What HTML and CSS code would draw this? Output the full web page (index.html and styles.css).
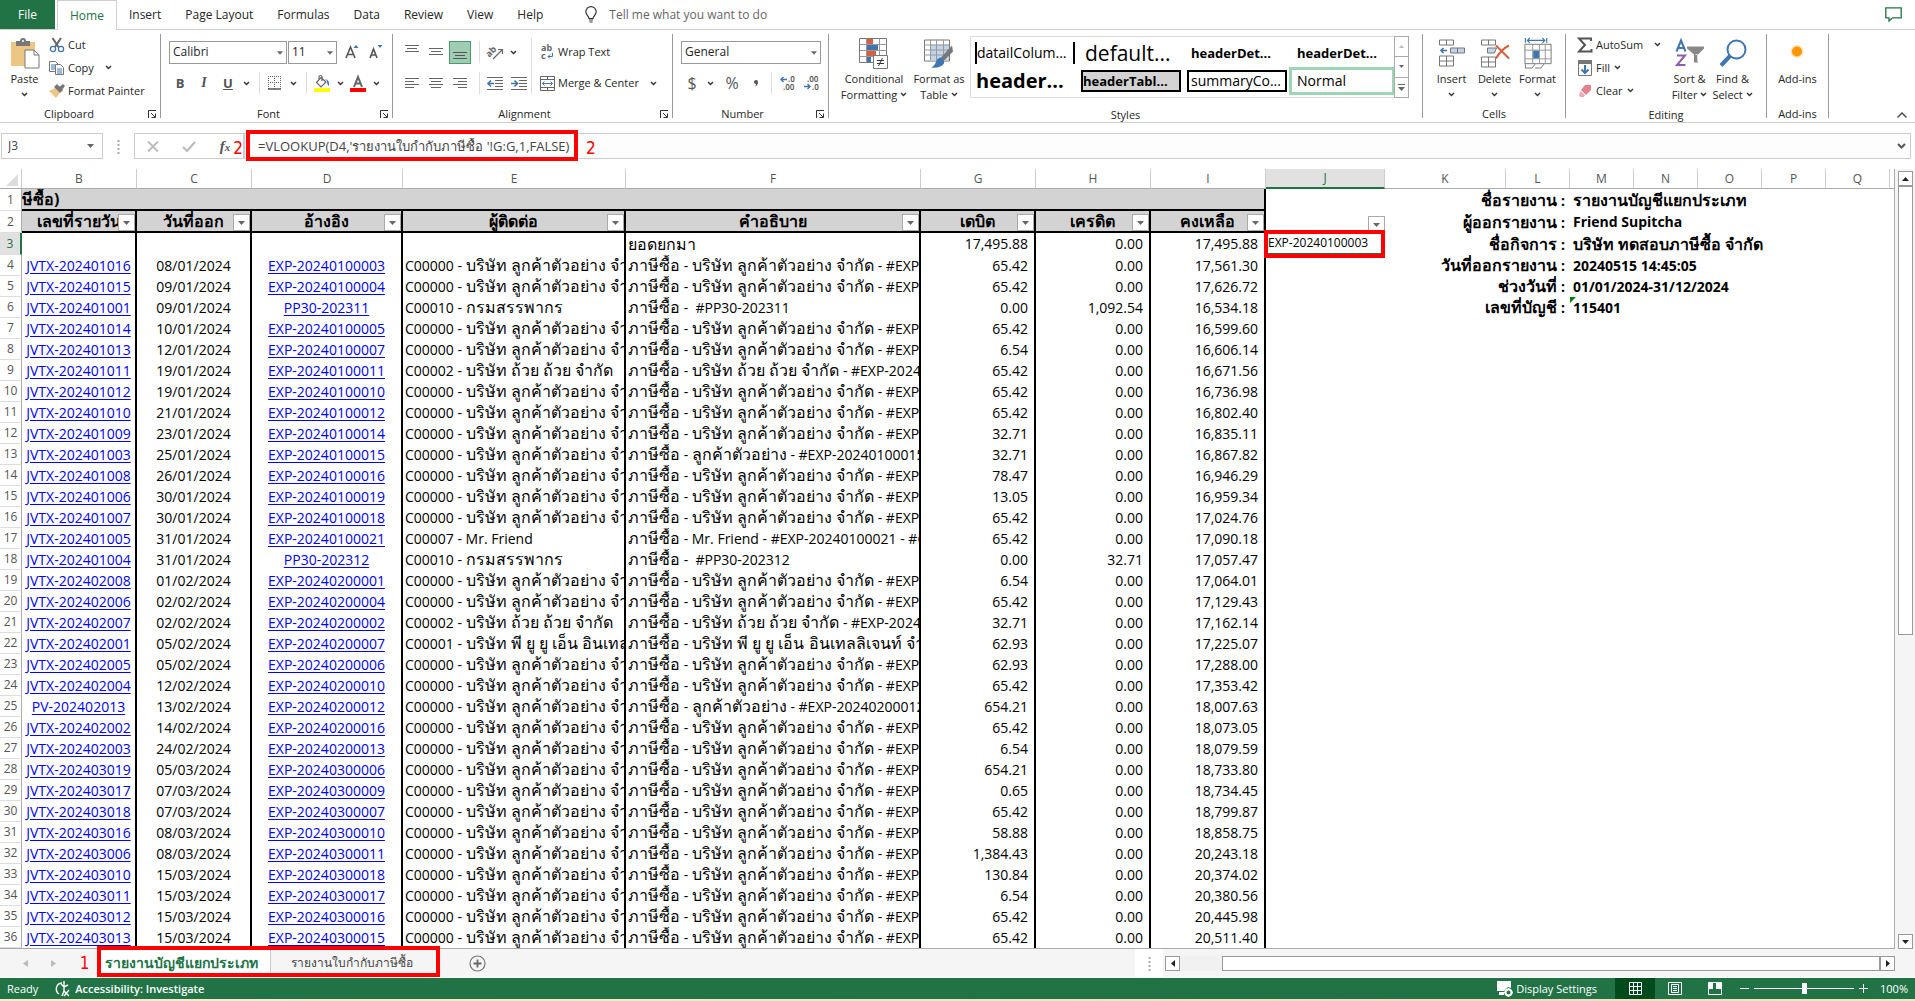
FILE: index.html
```html
<!DOCTYPE html>
<html lang="th">
<head>
<meta charset="utf-8">
<title>รายงานบัญชีแยกประเภท</title>
<meta name="viewport" content="width=device-width, initial-scale=1">
<link rel="stylesheet" href="styles.css">
</head>
<body>
<svg class="defs" aria-hidden="true">
  <symbol id="chev" viewBox="0 0 7 5"><path d="M1 1l2.500 2.500L6 1" fill="none" stroke="#333" stroke-width="1.400"/></symbol>
  <symbol id="launch" viewBox="0 0 9 9"><path d="M.5 8V.5H8M3 3l4 4M7.500 3.500v4h-4" fill="none" stroke="#333"/></symbol>
  <symbol id="tri" viewBox="0 0 7 4"><path d="M0 0h7L3.500 4z" fill="#666"/></symbol>
</svg>

<nav class="tabs">
  <button class="tab file">File</button>
  <button class="tab active">Home</button>
  <button class="tab">Insert</button>
  <button class="tab">Page Layout</button>
  <button class="tab">Formulas</button>
  <button class="tab">Data</button>
  <button class="tab">Review</button>
  <button class="tab">View</button>
  <button class="tab">Help</button>
  <button class="tab tell"><svg width="12" height="17" viewBox="0 0 12 17"><path d="M4 12.500C4 10 .8 9 .8 5.800a5.200 5.200 0 0 1 10.400 0C11.200 9 8 10 8 12.500zM4 14h4M4.500 16h3" fill="none" stroke="#333" stroke-width="1.200"/></svg>Tell me what you want to do</button>
  <button class="comment" aria-label="Comments"><svg width="17" height="15" viewBox="0 0 17 15"><path d="M.8.8h15.400v10H7.500L4 14v-3.200H.8z" fill="none" stroke="#217346" stroke-width="1.300"/></svg></button>
</nav>

<section class="ribbon">
  <div class="group g-clip">
    <div class="body">
      <button class="big paste"><svg width="30" height="31" viewBox="0 0 30 31"><path d="M1 4h24v24H1z" fill="#ecc683"/><path d="M6 3h4a3 3 0 0 1 6 0h4v5H6z" fill="#777"/><circle cx="13" cy="3" r="1" fill="#fff"/><path d="M15 12h9l5 5v13H15z" fill="#fff" stroke="#777"/><path d="M24 12v5h5" fill="none" stroke="#777"/></svg><span>Paste</span><svg class="chev"><use href="#chev"/></svg></button>
      <div class="smalls">
        <button class="small"><svg width="16" height="16" viewBox="0 0 16 16"><path d="M3.500 1l6 9M12 1l-6 9" stroke="#666" stroke-width="2"/><circle cx="4" cy="12" r="2.600" fill="none" stroke="#3f76b0" stroke-width="1.300"/><circle cx="12" cy="12" r="2.600" fill="none" stroke="#3f76b0" stroke-width="1.300"/></svg>Cut</button>
        <button class="small"><svg width="16" height="16" viewBox="0 0 16 16"><path d="M.5 1.500h6l3 3v7h-9z" fill="#fff" stroke="#777"/><path d="M2 5h4M2 7h4M2 9h4" stroke="#3f76b0"/><path d="M6.500 4.500h5l3 3v7h-8z" fill="#fff" stroke="#777"/><path d="M8 9h5M8 11h5M8 13h5" stroke="#3f76b0"/></svg>Copy<svg class="chev wide"><use href="#chev"/></svg></button>
        <button class="small"><svg width="16" height="16" viewBox="0 0 16 16"><path d="M0 8l6-3 5 5-4 5z" fill="#ecc683"/><path d="M5 4l3-3 6 6-3 3z" fill="#777"/><path d="M10 4l4-3 2 2-3 4z" fill="#777"/></svg>Format Painter</button>
      </div>
    </div>
    <div class="caption">Clipboard<button class="launch" aria-label="Clipboard settings"><svg><use href="#launch"/></svg></button></div>
  </div>

  <div class="group g-font">
    <div class="body rows">
      <div class="line">
        <label class="combo font-name"><select aria-label="Font"><option>Calibri</option></select><svg class="tri"><use href="#tri"/></svg></label>
        <label class="combo font-size"><select aria-label="Font size"><option>11</option></select><svg class="tri"><use href="#tri"/></svg></label>
        <button class="ic" aria-label="Increase font size"><svg width="14" height="16" viewBox="0 0 14 16"><path d="M1 14L5.500 3 10 14M2.500 10.500h6" fill="none" stroke="#555" stroke-width="1.600"/><path d="M8.500 4L11 1l2.500 3z" fill="#3f76b0"/></svg></button>
        <button class="ic" aria-label="Decrease font size"><svg width="14" height="16" viewBox="0 0 14 16"><path d="M1 14l3.500-9L8 14M2 11h5" fill="none" stroke="#555" stroke-width="1.600"/><path d="M8.500 1L11 4l2.500-3z" fill="#3f76b0"/></svg></button>
      </div>
      <div class="line">
        <button class="ic b">B</button><button class="ic i">I</button><button class="ic u">U</button><button class="dd" aria-label="Underline options"><svg class="chev"><use href="#chev"/></svg></button>
        <i class="sep"></i>
        <button class="ic" aria-label="Borders"><svg width="14" height="14" viewBox="0 0 14 14"><path d="M.5 0v13M6.500 0v13M12.500 0v13M0 .5h13M0 6.500h13" stroke="#666" stroke-dasharray="1 1"/><path d="M0 13h13" stroke="#555" stroke-width="1.500"/></svg></button><button class="dd" aria-label="Border options"><svg class="chev"><use href="#chev"/></svg></button>
        <i class="sep"></i>
        <button class="ic" aria-label="Fill colour"><svg width="17" height="17" viewBox="0 0 17 17"><path d="M0 13h16v4H0z" fill="#ff0"/><path d="M7 2.500L12 7l-5 5-4.500-4.500zM5 5V2a1.500 1.500 0 0 1 3 0v4" fill="#fff" stroke="#666" stroke-width="1.200"/><path d="M11 4q5 1 4 7-2-1-2-5z" fill="#3f76b0"/></svg></button><button class="dd" aria-label="Fill options"><svg class="chev"><use href="#chev"/></svg></button>
        <button class="ic" aria-label="Font colour"><svg width="17" height="17" viewBox="0 0 17 17"><path d="M0 13h16v4H0z" fill="red"/><path d="M4 12L8 2l4 10M5.500 8.500h5" fill="none" stroke="#666" stroke-width="2"/></svg></button><button class="dd" aria-label="Font colour options"><svg class="chev"><use href="#chev"/></svg></button>
      </div>
    </div>
    <div class="caption">Font<button class="launch" aria-label="Font settings"><svg><use href="#launch"/></svg></button></div>
  </div>

  <div class="group g-align">
    <div class="body">
      <div class="rows">
        <div class="line">
          <button class="ic" aria-label="Top align"><svg width="14" height="14" viewBox="0 0 14 14"><path d="M0 .5h14M2 3.500h10M0 6.500h14" stroke="#666"/></svg></button>
          <button class="ic" aria-label="Middle align"><svg width="14" height="14" viewBox="0 0 14 14"><path d="M0 3.500h14M2 6.500h10M0 9.500h14" stroke="#666"/></svg></button>
          <button class="ic on" aria-label="Bottom align"><svg width="14" height="14" viewBox="0 0 14 14"><path d="M0 7.500h14M2 10.500h10M0 13.500h14" stroke="#555"/></svg></button>
          <i class="sep"></i>
          <button class="ic" aria-label="Orientation"><svg width="17" height="16" viewBox="0 0 17 16"><text x="-1" y="10" transform="rotate(-45 5 8)" class="ab">ab</text><path d="M6 15l9-9M11 5.500h4.500V10" fill="none" stroke="#666" stroke-width="1.200"/></svg></button><button class="dd" aria-label="Orientation options"><svg class="chev"><use href="#chev"/></svg></button>
        </div>
        <div class="line">
          <button class="ic" aria-label="Align left"><svg width="14" height="13" viewBox="0 0 14 13"><path d="M0 1.500h14M0 4.500h9M0 7.500h14M0 10.500h9" stroke="#666"/></svg></button>
          <button class="ic" aria-label="Align centre"><svg width="14" height="13" viewBox="0 0 14 13"><path d="M0 1.500h14M2 4.500h10M0 7.500h14M2 10.500h10" stroke="#666"/></svg></button>
          <button class="ic" aria-label="Align right"><svg width="14" height="13" viewBox="0 0 14 13"><path d="M0 1.500h14M5 4.500h9M0 7.500h14M5 10.500h9" stroke="#666"/></svg></button>
          <i class="sep"></i>
          <button class="ic" aria-label="Decrease indent"><svg width="16" height="13" viewBox="0 0 16 13"><path d="M0 .5h16M8 3.500h8M8 6.500h8M8 9.500h8M0 12.500h16" stroke="#666"/><path d="M7 6.500H1M4 3.500l-3 3 3 3" fill="none" stroke="#3f76b0" stroke-width="1.600"/></svg></button>
          <button class="ic" aria-label="Increase indent"><svg width="16" height="13" viewBox="0 0 16 13"><path d="M0 .5h16M8 3.500h8M8 6.500h8M8 9.500h8M0 12.500h16" stroke="#666"/><path d="M0 6.500h6M3.500 3.500l3 3-3 3" fill="none" stroke="#3f76b0" stroke-width="1.600"/></svg></button>
        </div>
      </div>
      <i class="sep tall"></i>
      <div class="rows wrap">
        <div class="line"><button class="small"><svg width="15" height="16" viewBox="0 0 15 16"><text x="1" y="7" class="ab">ab</text><text x="1" y="15" class="ab">c</text><path d="M12.500 9v3.500H8M10 10.500l-2 2 2 2" fill="none" stroke="#3f76b0"/></svg>Wrap Text</button></div>
        <div class="line"><button class="small"><svg width="15" height="15" viewBox="0 0 15 15"><path d="M.5.500h14v14H.5zM.5 3.500h14M.5 11.500h14M7.500 0v3.500M7.500 11.500V15" fill="#fff" stroke="#666"/><path d="M2.500 7.500h10M4.500 5.500l-2 2 2 2M10.500 5.500l2 2-2 2" fill="none" stroke="#3f76b0"/></svg>Merge &amp; Center<svg class="chev wide"><use href="#chev"/></svg></button></div>
      </div>
    </div>
    <div class="caption">Alignment<button class="launch" aria-label="Alignment settings"><svg><use href="#launch"/></svg></button></div>
  </div>

  <div class="group g-num">
    <div class="body rows">
      <div class="line"><label class="combo num-format"><select aria-label="Number format"><option>General</option></select><svg class="tri"><use href="#tri"/></svg></label></div>
      <div class="line">
        <button class="ic sym">$</button><button class="dd" aria-label="Currency options"><svg class="chev"><use href="#chev"/></svg></button><button class="ic sym pct">%</button><button class="ic sym" aria-label="Comma style"><svg width="6" height="8" viewBox="0 0 6 8"><path d="M1 3a2 2 0 1 1 4 0q0 3-3 4.500 1-1 1-2.500-2 0-2-2z" fill="#555"/></svg></button>
        <i class="sep"></i>
        <button class="ic" aria-label="Increase decimal"><svg width="15" height="14" viewBox="0 0 15 14"><text x="8" y="6" class="dec">.0</text><text x="3" y="14" class="dec">.00</text><path d="M7 3.500H1M3.500 1L1 3.500 3.500 6" fill="none" stroke="#3f76b0" stroke-width="1.400"/></svg></button>
        <button class="ic" aria-label="Decrease decimal"><svg width="15" height="14" viewBox="0 0 15 14"><text x="3" y="6" class="dec">.00</text><text x="8" y="14" class="dec">.0</text><path d="M0 10.500h6M3.500 8L6 10.500 3.500 13" fill="none" stroke="#3f76b0" stroke-width="1.400"/></svg></button>
      </div>
    </div>
    <div class="caption">Number<button class="launch" aria-label="Number settings"><svg><use href="#launch"/></svg></button></div>
  </div>

  <div class="group g-styles">
    <div class="body">
      <button class="big cond"><svg width="30" height="31" viewBox="0 0 30 31"><path d="M.5.5h27v24H.5z" fill="#fff" stroke="#777"/><path d="M.5 6.500h27M.5 12.500h27M.5 18.500h27M7.500.5v24M20.500.5v24" stroke="#999"/><path d="M8 1h6v5H8zM8 13h9v5H8z" fill="#d65f3d"/><path d="M8 7h11v5H8zM8 19h4v5H8z" fill="#3f76b0"/><path d="M14.500 17.500h14v13h-14z" fill="#fff" stroke="#777"/><path d="M18 22.500h7M18 25.500h7M23.500 20l-4 8" stroke="#333"/></svg><span>Conditional<br>Formatting <svg class="chev"><use href="#chev"/></svg></span></button>
      <button class="big table"><svg width="30" height="30" viewBox="0 0 30 30"><path d="M.5 1.500h25v21H.5z" fill="#fff" stroke="#777"/><path d="M6 6h19v16H6z" fill="#c2d4e9"/><path d="M0 6.500h25M0 11.500h25M0 16.500h25M6.500 1v21M12.500 1v21M19.500 1v21" stroke="#999"/><path d="M28 7l1 6-9 9-3-3z" fill="#777"/><path d="M16 19q5 1 4 6-3 5-13 4 4-2 5-6 1-3 4-4z" fill="#3f76b0"/></svg><span>Format as<br>Table <svg class="chev"><use href="#chev"/></svg></span></button>
      <div class="gallery">
        <div class="swatches">
          <button class="sw bars">datailColum...</button><button class="sw large">default...</button><button class="sw bold">headerDet...</button><button class="sw bold">headerDet...</button>
          <button class="sw bold large">header...</button><button class="sw bold boxed grey">headerTabl...</button><button class="sw boxed">summaryCo...</button><button class="sw picked">Normal</button>
        </div>
        <div class="gscroll">
          <button aria-label="Previous styles" disabled><svg width="5" height="3" viewBox="0 0 7 4"><path d="M0 4h7L3.500 0z" fill="#bbb"/></svg></button>
          <button aria-label="Next styles"><svg width="5" height="3"><use href="#tri"/></svg></button>
          <button aria-label="All styles"><svg width="7" height="7" viewBox="0 0 7 7"><path d="M0 .5h7" stroke="#666"/><path d="M0 3h7L3.500 7z" fill="#666"/></svg></button>
        </div>
      </div>
    </div>
    <div class="caption">Styles</div>
  </div>

  <div class="group g-cells">
    <div class="body">
      <button class="big"><svg width="28" height="30" viewBox="0 0 28 30"><path d="M1.500 1.500h14v5h-14zM8.500 1.500v5M1.500 17.500h14v10h-14zM1.500 22.500h14M8.500 17.500v10" fill="#fff" stroke="#777"/><path d="M12.500 9.500h14v5h-14zM19.500 9.500v5" fill="#c2d4e9" stroke="#777"/><path d="M9 12H3M5.500 9.500L3 12l2.500 2.500" fill="none" stroke="#3f76b0" stroke-width="1.600"/></svg><span>Insert</span><svg class="chev"><use href="#chev"/></svg></button>
      <button class="big"><svg width="30" height="30" viewBox="0 0 30 30"><path d="M1.500 1.500h14v5h-14zM8.500 1.500v5M1.500 18.500h14v10h-14zM1.500 23.500h14M8.500 18.500v10" fill="#fff" stroke="#777"/><path d="M7.500 9.500h9l-2 5h-7z" fill="#c2d4e9" stroke="#777"/><path d="M16 7l13 13M29 7q-8 4-13 13" fill="none" stroke="#d65f3d" stroke-width="2"/></svg><span>Delete</span><svg class="chev"><use href="#chev"/></svg></button>
      <button class="big"><svg width="28" height="32" viewBox="0 0 28 32"><path d="M1 0v5M23 0v5M3 2.500h18M5.500 0L3 2.500 5.500 5M18.500 0L21 2.500 18.500 5" fill="none" stroke="#3f76b0" stroke-width="1.200"/><path d="M.5 6.500h27v20H.5z" fill="#fff" stroke="#777"/><path d="M.5 12.500h27M.5 21.500h27M8.500 6.500v20M15.500 6.500v20M21.500 6.500v20" stroke="#999"/><path d="M9 13h6v8H9z" fill="#3f76b0"/><path d="M1 27v4h7l3-4M11 31h6l3-4" fill="none" stroke="#777"/></svg><span>Format</span><svg class="chev"><use href="#chev"/></svg></button>
    </div>
    <div class="caption">Cells</div>
  </div>

  <div class="group g-edit">
    <div class="body">
      <div class="smalls">
        <button class="small"><svg width="16" height="16" viewBox="0 0 16 16"><path d="M14 4V1.500H2L8 8l-6 6.500h12.500V12" fill="none" stroke="#555" stroke-width="2"/></svg>AutoSum<svg class="chev wide"><use href="#chev"/></svg></button>
        <button class="small"><svg width="16" height="16" viewBox="0 0 16 16"><path d="M1.500.5h13v15h-13z" fill="#fff" stroke="#777"/><path d="M1 0h14v4H1z" fill="#777"/><path d="M8 5v8M4.500 9.500L8 13l3.500-3.500" fill="none" stroke="#3f76b0" stroke-width="2"/></svg>Fill<svg class="chev"><use href="#chev"/></svg></button>
        <button class="small"><svg width="16" height="16" viewBox="0 0 16 16"><path d="M8 2h6v5l-5 5-5-5z" fill="#e5818f"/><path d="M3.500 8L8 12.500 6.500 14H3l-1-2z" fill="#f0a8b2"/></svg>Clear<svg class="chev"><use href="#chev"/></svg></button>
      </div>
      <button class="big sort"><svg width="30" height="30" viewBox="0 0 30 30"><path d="M1.500 13L6 2l4.500 11M3 9.500h6" fill="none" stroke="#3f76b0" stroke-width="2"/><path d="M2 17h8L2 26.500h8.500" fill="none" stroke="#8d5bb0" stroke-width="2"/><path d="M12 8h17v2l-6 6v8h-4v-8l-7-6z" fill="#888"/><path d="M20.500 16h2v7" fill="none" stroke="#ddd"/></svg><span>Sort &amp;<br>Filter <svg class="chev"><use href="#chev"/></svg></span></button>
      <button class="big find"><svg width="28" height="30" viewBox="0 0 28 30"><circle cx="17.500" cy="11" r="9" fill="none" stroke="#3f76b0" stroke-width="2"/><path d="M11 17.500L2 27" stroke="#3f76b0" stroke-width="4"/></svg><span>Find &amp;<br>Select <svg class="chev"><use href="#chev"/></svg></span></button>
    </div>
    <div class="caption">Editing</div>
  </div>

  <div class="group g-add">
    <div class="body"><button class="big"><svg width="30" height="30" viewBox="0 0 30 30"><circle cx="15" cy="13" r="6.500" fill="#ffe3b8"/><circle cx="15" cy="13" r="5" fill="#ff9500"/></svg><span>Add-ins</span></button></div>
    <div class="caption">Add-ins</div>
  </div>
  <button class="collapse" aria-label="Collapse ribbon"><svg width="10" height="6" viewBox="0 0 10 6"><path d="M.5 5.500L5 1l4.500 4.500" fill="none" stroke="#444" stroke-width="1.400"/></svg></button>
</section>

<section class="fbar">
  <label class="namebox"><input value="J3" aria-label="Name box"><svg class="tri"><use href="#tri"/></svg></label>
  <svg class="grip" width="3" height="13" viewBox="0 0 3 13"><path d="M.5 1h2M.5 5h2M.5 9h2M.5 13h2" stroke="#aaa" stroke-width="2"/></svg>
  <div class="fbtns">
    <button aria-label="Cancel"><svg width="12" height="11" viewBox="0 0 12 11"><path d="M1 .5l10 10M11 .5l-10 10" stroke="#bbb" stroke-width="1.800"/></svg></button>
    <button aria-label="Enter"><svg width="14" height="11" viewBox="0 0 14 11"><path d="M1 6l4 4 8-9" fill="none" stroke="#bbb" stroke-width="2.200"/></svg></button>
    <button class="fx" aria-label="Insert function"><i>f</i><small>x</small></button>
    <span class="mark m-left">2</span>
  </div>
  <div class="formula">
    <input value="=VLOOKUP(D4,'รายงานใบกำกับภาษีซื้อ '!G:G,1,FALSE)" aria-label="Formula">
    <svg width="9" height="6" viewBox="0 0 9 6"><path d="M1 1l3.500 3.500L8 1" fill="none" stroke="#555" stroke-width="2"/></svg>
    <span class="hl"></span><span class="mark m-right">2</span>
  </div>
</section>

<main class="sheet">
  <div class="grid">
  <table>
    <colgroup><col class="w-h"><col class="w-m"><col class="w-m"><col class="w-d"><col class="w-e"><col class="w-f"><col class="w-m"><col class="w-m"><col class="w-m"><col class="w-j"><col class="w-k"><col class="w-s"><col class="w-s"><col class="w-s"><col class="w-s"><col class="w-s"><col class="w-s"><col></colgroup>
    <thead><tr><th class="corner"><svg width="12" height="12" viewBox="0 0 12 12"><path d="M12 0v12H0z" fill="#ddd"/></svg></th><th>B</th><th>C</th><th>D</th><th>E</th><th>F</th><th>G</th><th>H</th><th>I</th><th class="sel">J</th><th>K</th><th>L</th><th>M</th><th>N</th><th>O</th><th>P</th><th>Q</th><th></th></tr></thead>
    <tbody class="title">
      <tr><th>1</th><td colspan="8" class="t">ษีซื้อ)</td><td></td><td colspan="2" class="lab"><span class="th">ชื่อรายงาน</span> :</td><td colspan="6" class="val"><span class="th">รายงานบัญชีแยกประเภท</span></td></tr>
      <tr><th>2</th>
        <td class="h">เลขที่รายวัน<button class="flt" aria-label="Filter"><svg class="tri"><use href="#tri"/></svg></button></td>
        <td class="h">วันที่ออก<button class="flt" aria-label="Filter"><svg class="tri"><use href="#tri"/></svg></button></td>
        <td class="h">อ้างอิง<button class="flt" aria-label="Filter"><svg class="tri"><use href="#tri"/></svg></button></td>
        <td class="h">ผู้ติดต่อ<button class="flt" aria-label="Filter"><svg class="tri"><use href="#tri"/></svg></button></td>
        <td class="h">คำอธิบาย<button class="flt" aria-label="Filter"><svg class="tri"><use href="#tri"/></svg></button></td>
        <td class="h">เดบิต<button class="flt" aria-label="Filter"><svg class="tri"><use href="#tri"/></svg></button></td>
        <td class="h">เครดิต<button class="flt" aria-label="Filter"><svg class="tri"><use href="#tri"/></svg></button></td>
        <td class="h">คงเหลือ<button class="flt" aria-label="Filter"><svg class="tri"><use href="#tri"/></svg></button></td>
        <td class="jf"><button class="flt" aria-label="Filter"><svg class="tri"><use href="#tri"/></svg></button></td><td colspan="2" class="lab"><span class="th">ผู้ออกรายงาน</span> :</td><td colspan="6" class="val">Friend Supitcha</td></tr>
    </tbody>
    <tbody class="data" id="ledger">
      <tr class="first"><th class="sel">3</th><td></td><td></td><td></td><td></td><td><span class="th">ยอดยกมา</span></td><td>17,495.88</td><td>0.00</td><td>17,495.88</td><td class="j3">EXP-20240100003<span class="hl"></span></td><td colspan="2" class="lab"><span class="th">ชื่อกิจการ</span> :</td><td colspan="6" class="val"><span class="th">บริษัท ทดสอบภาษีซื้อ จำกัด</span></td></tr>
    </tbody>
  </table>
  </div>
  <div class="vscroll">
    <button aria-label="Scroll up"><svg width="7" height="4" viewBox="0 0 7 4"><path d="M0 4h7L3.500 0z" fill="#222"/></svg></button>
    <div class="thumb"></div>
    <div class="track"></div>
    <button aria-label="Scroll down"><svg width="7" height="4" viewBox="0 0 7 4"><path d="M0 0h7L3.500 4z" fill="#222"/></svg></button>
  </div>
</main>

<section class="sheets">
  <button class="nav" aria-label="Previous sheet"><svg width="5" height="7" viewBox="0 0 5 7"><path d="M5 0v7L0 3.500z" fill="#bbb"/></svg></button>
  <button class="nav" aria-label="Next sheet"><svg width="5" height="7" viewBox="0 0 5 7"><path d="M0 0v7l5-3.500z" fill="#bbb"/></svg></button>
  <span class="mark">1</span>
  <div class="sheet-tabs">
    <button class="st active">รายงานบัญชีแยกประเภท</button>
    <button class="st">รายงานใบกำกับภาษีซื้อ</button>
    <span class="hl"></span>
  </div>
  <button class="add" aria-label="New sheet"><svg width="17" height="17" viewBox="0 0 17 17"><circle cx="8.500" cy="8.500" r="7.500" fill="none" stroke="#777" stroke-width="1.200"/><path d="M8.500 4.500v8M4.500 8.500h8" stroke="#666" stroke-width="1.800"/></svg></button>
  <span class="handle"><svg width="3" height="13" viewBox="0 0 3 13"><path d="M.5 1h2M.5 5h2M.5 9h2M.5 13h2" stroke="#aaa" stroke-width="2"/></svg></span>
  <div class="hscroll">
    <button aria-label="Scroll left"><svg width="4" height="7" viewBox="0 0 4 7"><path d="M4 0v7L0 3.500z" fill="#222"/></svg></button>
    <div class="track"></div>
    <div class="thumb"></div>
    <button aria-label="Scroll right"><svg width="4" height="7" viewBox="0 0 4 7"><path d="M0 0v7l4-3.500z" fill="#222"/></svg></button>
  </div>
</section>

<footer class="status">
  <span class="ready">Ready</span>
  <button class="acc"><svg width="16" height="16" viewBox="0 0 16 16"><path d="M6 2a6 6 0 0 0-3 11M8 0v5M5 3l3 3 4-2M8 6v4l-2 5M8 10l5 5M13 9l-5 6" fill="none" stroke="#fff" stroke-width="1.400"/></svg>Accessibility: Investigate</button>
  <button class="disp"><svg width="16" height="16" viewBox="0 0 16 16"><path d="M0 0h14v7l-3-1-4 4H0zM2 11h5v3H2z" fill="#fff"/><circle cx="11.500" cy="11.500" r="3" fill="none" stroke="#fff" stroke-width="2"/><path d="M11.500 7v2M11.500 14v2M7 11.500h2M14 11.500h2" stroke="#fff" stroke-width="1.600"/></svg>Display Settings</button>
  <button class="view on" aria-label="Normal view"><svg width="13" height="13" viewBox="0 0 13 13"><path d="M.5.500h12v12H.5zM.5 4.500h12M.5 8.500h12M4.500.5v12M8.500.5v12" fill="none" stroke="#fff"/></svg></button>
  <button class="view" aria-label="Page layout view"><svg width="14" height="13" viewBox="0 0 14 13"><path d="M.5.500h13v12H.5zM3.500 2.500h7v8h-7zM5 4.500h4M5 6.500h4M5 8.500h4" fill="none" stroke="#fff"/></svg></button>
  <button class="view" aria-label="Page break view"><svg width="14" height="13" viewBox="0 0 14 13"><path d="M.5.500h13v12H.5z" fill="none" stroke="#fff"/><path d="M1 1h4v6H1zM8 1h5v6H8z" fill="#fff"/></svg></button>
  <button class="zb" aria-label="Zoom out"><svg width="9" height="9" viewBox="0 0 9 9"><path d="M0 4.500h9" stroke="#fff"/></svg></button>
  <input type="range" min="10" max="190" value="100" aria-label="Zoom">
  <button class="zb" aria-label="Zoom in"><svg width="9" height="9" viewBox="0 0 9 9"><path d="M0 4.500h9M4.500 0v9" stroke="#fff"/></svg></button>
  <span class="pct">100%</span>
</footer>
<div class="desktop"></div>
<script src="ledger.js"></script>
</body>
</html>
```
FILE: ledger.js
```js
// Journal entries: number | date | reference | contact | debit | credit | balance
const A = 'C00000 - บริษัท ลูกค้าตัวอย่าง จำกัด';
const B = 'C00002 - บริษัท ถ้วย ถ้วย จำกัด';
const REV = 'C00010 - กรมสรรพากร';
const entries = [
  ['JVTX-202401016', '08/01/2024', 'EXP-20240100003', A, '65.42', '0.00', '17,561.30'],
  ['JVTX-202401015', '09/01/2024', 'EXP-20240100004', A, '65.42', '0.00', '17,626.72'],
  ['JVTX-202401001', '09/01/2024', 'PP30-202311', REV, '0.00', '1,092.54', '16,534.18'],
  ['JVTX-202401014', '10/01/2024', 'EXP-20240100005', A, '65.42', '0.00', '16,599.60'],
  ['JVTX-202401013', '12/01/2024', 'EXP-20240100007', A, '6.54', '0.00', '16,606.14'],
  ['JVTX-202401011', '19/01/2024', 'EXP-20240100011', B, '65.42', '0.00', '16,671.56'],
  ['JVTX-202401012', '19/01/2024', 'EXP-20240100010', A, '65.42', '0.00', '16,736.98'],
  ['JVTX-202401010', '21/01/2024', 'EXP-20240100012', A, '65.42', '0.00', '16,802.40'],
  ['JVTX-202401009', '23/01/2024', 'EXP-20240100014', A, '32.71', '0.00', '16,835.11'],
  ['JVTX-202401003', '25/01/2024', 'EXP-20240100015', A, '32.71', '0.00', '16,867.82', 'ลูกค้าตัวอย่าง'],
  ['JVTX-202401008', '26/01/2024', 'EXP-20240100016', A, '78.47', '0.00', '16,946.29'],
  ['JVTX-202401006', '30/01/2024', 'EXP-20240100019', A, '13.05', '0.00', '16,959.34'],
  ['JVTX-202401007', '30/01/2024', 'EXP-20240100018', A, '65.42', '0.00', '17,024.76'],
  ['JVTX-202401005', '31/01/2024', 'EXP-20240100021', 'C00007 - Mr. Friend', '65.42', '0.00', '17,090.18'],
  ['JVTX-202401004', '31/01/2024', 'PP30-202312', REV, '0.00', '32.71', '17,057.47'],
  ['JVTX-202402008', '01/02/2024', 'EXP-20240200001', A, '6.54', '0.00', '17,064.01'],
  ['JVTX-202402006', '02/02/2024', 'EXP-20240200004', A, '65.42', '0.00', '17,129.43'],
  ['JVTX-202402007', '02/02/2024', 'EXP-20240200002', B, '32.71', '0.00', '17,162.14'],
  ['JVTX-202402001', '05/02/2024', 'EXP-20240200007', 'C00001 - บริษัท พี ยู ยู เอ็น อินเทลลิเจนท์ จำกัด', '62.93', '0.00', '17,225.07'],
  ['JVTX-202402005', '05/02/2024', 'EXP-20240200006', A, '62.93', '0.00', '17,288.00'],
  ['JVTX-202402004', '12/02/2024', 'EXP-20240200010', A, '65.42', '0.00', '17,353.42'],
  ['PV-202402013', '13/02/2024', 'EXP-20240200012', A, '654.21', '0.00', '18,007.63', 'ลูกค้าตัวอย่าง'],
  ['JVTX-202402002', '14/02/2024', 'EXP-20240200016', A, '65.42', '0.00', '18,073.05'],
  ['JVTX-202402003', '24/02/2024', 'EXP-20240200013', A, '6.54', '0.00', '18,079.59'],
  ['JVTX-202403019', '05/03/2024', 'EXP-20240300006', A, '654.21', '0.00', '18,733.80'],
  ['JVTX-202403017', '07/03/2024', 'EXP-20240300009', A, '0.65', '0.00', '18,734.45'],
  ['JVTX-202403018', '07/03/2024', 'EXP-20240300007', A, '65.42', '0.00', '18,799.87'],
  ['JVTX-202403016', '08/03/2024', 'EXP-20240300010', A, '58.88', '0.00', '18,858.75'],
  ['JVTX-202403006', '08/03/2024', 'EXP-20240300011', A, '1,384.43', '0.00', '20,243.18'],
  ['JVTX-202403010', '15/03/2024', 'EXP-20240300018', A, '130.84', '0.00', '20,374.02'],
  ['JVTX-202403011', '15/03/2024', 'EXP-20240300017', A, '6.54', '0.00', '20,380.56'],
  ['JVTX-202403012', '15/03/2024', 'EXP-20240300016', A, '65.42', '0.00', '20,445.98'],
  ['JVTX-202403013', '15/03/2024', 'EXP-20240300015', A, '65.42', '0.00', '20,511.40'],
];

// Report details shown beside rows 4 to 6
const details = [
  ['วันที่ออกรายงาน :', '20240515 14:45:05', ''],
  ['ช่วงวันที่ :', '01/01/2024-31/12/2024', ''],
  ['เลขที่บัญชี :', '115401', ' err'],
];

// Thai runs are set one step larger than the Latin text around them
const thai = s => s.replace(/[\u0E00-\u0E7F]+(?: [\u0E00-\u0E7F]+)*/g, '<span class="th">$&</span>');

function describe(ref, contact, short) {
  if (contact === REV) return 'ภาษีซื้อ - &nbsp;#' + ref;
  const name = short || contact.split(' - ')[1];
  return 'ภาษีซื้อ - ' + name + ' - #' + ref + (name === 'Mr. Friend' ? ' - #C00007' : '');
}

document.getElementById('ledger').insertAdjacentHTML('beforeend', entries.map((e, i) => {
  const [no, date, ref, contact, debit, credit, balance, short] = e;
  const d = details[i];
  const side = d
    ? `<td></td><td colspan="2" class="lab">${thai(d[0])}</td><td colspan="6" class="val${d[2]}">${d[1]}</td>`
    : '<td colspan="9"></td>';
  return `<tr><th>${i + 4}</th><td><a href="#">${no}</a></td><td>${date}</td><td><a href="#">${ref}</a></td>` +
    `<td>${thai(contact)}</td><td>${thai(describe(ref, contact, short))}</td>` +
    `<td>${debit}</td><td>${credit}</td><td>${balance}</td>${side}</tr>`;
}).join(''));
```
FILE: styles.css
```css
* { box-sizing: border-box; }
body {
  margin: 0;
  min-height: 100vh;
  display: flex;
  flex-direction: column;
  background: #fff;
  color: #262626;
  font: 12px/16px "Open Sans", "Noto Sans", sans-serif;
  overflow-x: hidden;
}
button, input, select { font: inherit; color: inherit; }
button { border: 0; padding: 0; margin: 0; background: none; white-space: nowrap; }
svg { display: block; flex: none; overflow: visible; }
.defs { position: absolute; width: 0; height: 0; }
.chev { width: 7px; height: 5px; }
.tri { width: 7px; height: 4px; }

/* Ribbon tabs */
.tabs { display: flex; align-items: stretch; height: 30px; border-bottom: 1px solid #d2d0ce; }
.tab { padding: 0 12px; }
.tab.file { width: 55px; margin-right: 2px; background: #217346; color: #fff; }
.tab.active { border: 1px solid #d2d0ce; border-bottom: 0; background: #fff; color: #217346; margin-bottom: -1px; }
.tab.tell { display: flex; align-items: center; gap: 12px; color: #666; margin-left: 18px; }
.comment { margin-left: auto; padding-right: 13px; }

/* Ribbon */
.ribbon { display: flex; height: 93px; border-bottom: 1px solid #d2d0ce; padding: 4px 0; font-size: 11px; }
.group { display: flex; flex-direction: column; flex: none; border-right: 1px solid #999; }
.g-clip { width: 161px; }
.g-font { width: 232px; }
.g-align { width: 280px; }
.g-num { width: 156px; }
.g-styles { width: 594px; }
.g-cells { width: 143px; }
.g-edit { width: 201px; }
.g-add { width: 62px; }
.body { display: flex; flex: 1; }
.caption { position: relative; height: 16px; line-height: 24px; text-align: center; padding-right: 22px; }
.g-font .caption, .g-align .caption, .g-num .caption { padding-right: 16px; }
.g-styles .caption, .g-cells .caption, .g-edit .caption, .g-add .caption { padding-right: 0; }
.launch { position: absolute; right: 3px; top: 8px; }
.launch svg { width: 9px; height: 9px; }
.big { display: flex; flex-direction: column; align-items: center; padding-top: 4px; line-height: 16px; }
.big > svg:first-child { height: 31px; margin-bottom: 2px; }
.big > .chev { margin-top: 5px; }
.big span .chev { display: inline-block; vertical-align: 2px; }
.paste { width: 49px; }
.smalls { display: flex; flex-direction: column; margin-top: -1px; }
.small { display: flex; align-items: center; gap: 3px; height: 23px; }
.small .chev { margin-left: 1px; }
.small .chev.wide { margin-left: 8px; }
.rows { display: flex; flex-direction: column; padding-top: 5px; gap: 5px; }
.line { display: flex; align-items: center; height: 26px; }
.ic { width: 24px; height: 24px; display: flex; align-items: center; justify-content: center; color: #555; font-size: 13px; font-weight: 700; }
.ic.i { font-family: "Liberation Serif", serif; font-style: italic; font-size: 14px; }
.ic.u { text-decoration: underline; }
.ic.on { width: 22px; height: 23px; margin: 0 1px; background: #9fcdb3; border: 1px solid #459b6c; }
.ic.sym { font-size: 16px; font-weight: 400; }
.dd { width: 12px; height: 24px; display: flex; align-items: center; justify-content: center; }
.sep { width: 1px; height: 22px; margin: 0 3px 0 7px; background: #ddd; }
.sep.tall { height: 56px; margin: 4px 8px 0 0; }
.g-font .rows { padding-left: 7px; }
.combo { position: relative; display: block; height: 23px; margin-left: 1px; }
.combo + .combo { margin-right: 3px; }
.combo select { appearance: none; width: 100%; height: 23px; border: 1px solid #999; border-radius: 0; background: #fff; padding: 0 3px; font-size: 12px; }
.combo .tri { position: absolute; right: 4px; top: 10px; width: 6px; }
.font-name { width: 118px; }
.font-size { width: 49px; }
.g-align .rows { padding-left: 7px; }
.g-align .rows.wrap { padding-left: 0; }
.g-num .rows { padding-left: 7px; }
.num-format { width: 140px; }
.ab { font: 700 9px "Noto Sans", sans-serif; fill: #666; }
.dec { font: 600 8px "Noto Sans", sans-serif; fill: #555; }
.pct.ic { margin-left: 4px; }
.g-num .sep { margin-left: 3px; }
.cond { width: 68px; margin-left: 11px; }
.table.big { width: 62px; }
.gallery { display: flex; height: 62px; margin-top: 2px; border: 1px solid #ddd; }
.swatches { display: grid; grid-template-columns: repeat(4, 106px); grid-template-rows: 31px 26px; align-items: center; }
.sw { display: flex; align-items: center; width: 100px; height: 22px; margin-left: 4px; padding-left: 4px; color: #000; font-size: 14px; }
.sw.bars { border-left: 2px solid #000; border-right: 2px solid #000; padding: 0; }
.sw.bold { font-weight: 700; font-size: 13px; }
.sw.large { font-size: 21px; }
.sw.bold.large { padding-left: 1px; font-size: 20px; }
.sw.boxed { border: 2px solid #000; padding-left: 2px; }
.sw.grey { background: #d3d3d3; padding-left: 0; }
.sw.picked { width: 106px; height: 28px; margin-left: 0; border: 3px solid #9fd5b7; padding-left: 5px; }
.gscroll { display: flex; flex-direction: column; width: 15px; margin: -1px; }
.gscroll button { flex: 1; border: 1px solid #aaa; margin-bottom: -1px; display: flex; align-items: center; justify-content: center; }
.gscroll button:last-child { margin-bottom: 0; }
.g-cells .body { padding-left: 7px; }
.g-cells .big { width: 43px; }
.g-edit .body { padding-left: 11px; }
.g-edit .smalls { width: 91px; }
.sort { width: 43px; }
.find { width: 43px; }
.g-add .body { justify-content: center; }
.collapse { margin-left: auto; align-self: flex-end; padding: 0 8px 0 0; }

/* Formula bar */
.fbar { display: flex; align-items: center; height: 46px; padding: 0 4px 0 1px; background: #fff; color: #444; font-size: 13px; }
.fbar input { border: 0; background: none; outline: 0; padding: 0; flex: 1; min-width: 0; }
.namebox { display: flex; align-items: center; width: 102px; height: 26px; border: 1px solid #ccc; padding: 0 8px 0 6px; font-size: 12px; }
.grip { margin: 0 14px; }
.fbtns { position: relative; display: flex; align-items: center; width: 110px; height: 26px; border: 1px solid #ccc; }
.fbtns button { width: 36px; display: flex; justify-content: center; align-items: baseline; }
.fx { font: 700 15px/18px "Liberation Serif", serif; color: #555; }
.fx small { font-size: 11px; font-style: italic; }
.formula { position: relative; display: flex; align-items: center; flex: 1; height: 26px; border: 1px solid #ccc; padding: 0 4px 0 13px; background: #fdfdfd; }
.hl { position: absolute; border: 4px solid red; pointer-events: none; }
.formula .hl { left: 1px; top: -4px; width: 332px; height: 31px; }
.mark { color: red; font: 17px/22px "DejaVu Sans Condensed", "DejaVu Sans", sans-serif; }
.m-left { position: absolute; right: 0; top: 3px; }
.m-right { position: absolute; left: 341px; top: 3px; }

/* Grid */
.sheet { display: flex; height: 780px; }
.grid { flex: 1; min-width: 0; overflow: hidden; border-right: 1px solid #ababab; border-bottom: 1px solid #ababab; }
table { width: 100%; table-layout: fixed; border-collapse: separate; border-spacing: 0; color: #000; font-size: 14px; }
.w-h { width: 22px; } .w-m { width: 115px; } .w-d { width: 151px; } .w-e { width: 223px; } .w-f { width: 295px; }
.w-j { width: 119px; } .w-k { width: 121px; } .w-s { width: 64px; }
th, td { padding: 0 2px; height: 21px; line-height: 20px; white-space: nowrap; overflow: hidden; }
th { font-weight: 400; font-size: 12px; color: #555; padding: 0; text-align: center; }
.th { font-size: 16px; }
thead th { height: 20px; line-height: 19px; border-right: 1px solid #ccc; border-bottom: 1px solid #ababab; }
thead th:last-child { border-right: 0; }
thead .sel { background: #e1e1e1; color: #217346; border-bottom: 2px solid #217346; line-height: 18px; }
.corner svg { margin: 2px 0 0 6px; }
tbody th { border-right: 1px solid #ababab; border-bottom: 1px solid #ddd; }
tbody th.sel { background: #e1e1e1; color: #217346; border-right: 2px solid #217346; }
.title th, .title td { height: 22px; }
.title .t, .title .h { background: #d3d3d3; font-size: 16px; font-weight: 700; border-bottom: 2px solid #000; border-right: 2px solid #000; }
.title .t { padding-left: 0; }
.title .h { position: relative; text-align: center; }
.flt { position: absolute; right: 0; bottom: 0; width: 17px; height: 17px; border: 1px solid #aaa; background: #fff; display: flex; align-items: center; justify-content: center; }
.jf { position: relative; }
.lab { text-align: right; font-weight: 700; padding-right: 5px; }
.val { text-align: left; font-weight: 700; padding-left: 3px; }
.data .first > * { height: 22px; }
.data td:nth-child(-n+9) { border-right: 2px solid #000; }
.data td:nth-child(2), .data td:nth-child(3), .data td:nth-child(4) { text-align: center; }
.data td:nth-child(7), .data td:nth-child(8), .data td:nth-child(9) { text-align: right; padding-right: 6px; }
.data a { color: #00f; text-underline-offset: 2px; }
.j3 { position: relative; overflow: visible; font-size: 12px; border-bottom: 2px solid #217346; }
.j3 .hl { left: -2px; top: -3px; width: 121px; height: 28px; }
.err { position: relative; }
.err::before { content: ""; position: absolute; left: 0; top: 0; border: 3px solid transparent; border-left-color: green; border-top-color: green; }
.vscroll { display: flex; flex-direction: column; width: 20px; padding: 2px 3px 0; background: #f5f5f5; }
.vscroll button, .hscroll button { flex: none; width: 15px; height: 15px; border: 1px solid #999; background: #fff; display: flex; align-items: center; justify-content: center; }
.vscroll .thumb { flex: 448; width: 15px; border: 1px solid #999; background: #fff; }
.vscroll .track { flex: 300; }

/* Sheet tabs */
.sheets { display: flex; align-items: center; height: 28px; background: #f5f5f5; color: #444; }
.nav { width: 28px; display: flex; justify-content: center; }
.nav:first-child { margin-left: 11px; }
.sheets .mark { width: 31px; text-align: center; padding-left: 4px; }
.sheet-tabs { position: relative; display: flex; align-self: stretch; }
.st { width: 168px; padding-right: 6px; }
.st.active { width: 173px; background: #fff; color: #217346; font-size: 14px; font-weight: 700; border-right: 1px solid #ccc; }
.sheet-tabs .hl { left: -1px; top: -3px; right: -1px; bottom: 0; }
.add { margin-left: 30px; }
.handle { display: flex; justify-content: center; align-items: center; align-self: stretch; width: 28px; margin-left: auto; background: #fff; }
.hscroll { display: flex; width: 39%; max-width: 730px; margin: 0 20px 0 2px; background: #f1f1f1; }
.hscroll .track { flex: 42; }
.hscroll .thumb { flex: 656; border: 1px solid #999; background: #fff; }

/* Status bar */
.status { display: flex; align-items: center; height: 21px; margin-top: 1px; padding: 0 7px; background: #217346; color: #fff; font-size: 11px; }
.acc, .disp { display: flex; align-items: center; gap: 3px; }
.acc { margin-left: 18px; font-weight: 600; }
.disp { margin-left: auto; margin-right: 18px; }
.view { width: 40px; height: 21px; display: flex; align-items: center; justify-content: center; }
.view.on { background: #004b1c; }
.zb { width: 9px; margin-left: 5px; }
.status input { appearance: none; width: 100px; height: 12px; margin: 0 0 0 5px; background: linear-gradient(#fff, #fff) center / 100% 1px no-repeat; }
.status input::-webkit-slider-thumb { appearance: none; width: 5px; height: 11px; background: #fff; }
.status .pct { margin-left: 12px; }
.desktop { flex: 1; min-height: 3px; background: linear-gradient(90deg, #f3eed0, #e6edc2 50%, #f3dcc4 75%, #e6edc2); }
```
